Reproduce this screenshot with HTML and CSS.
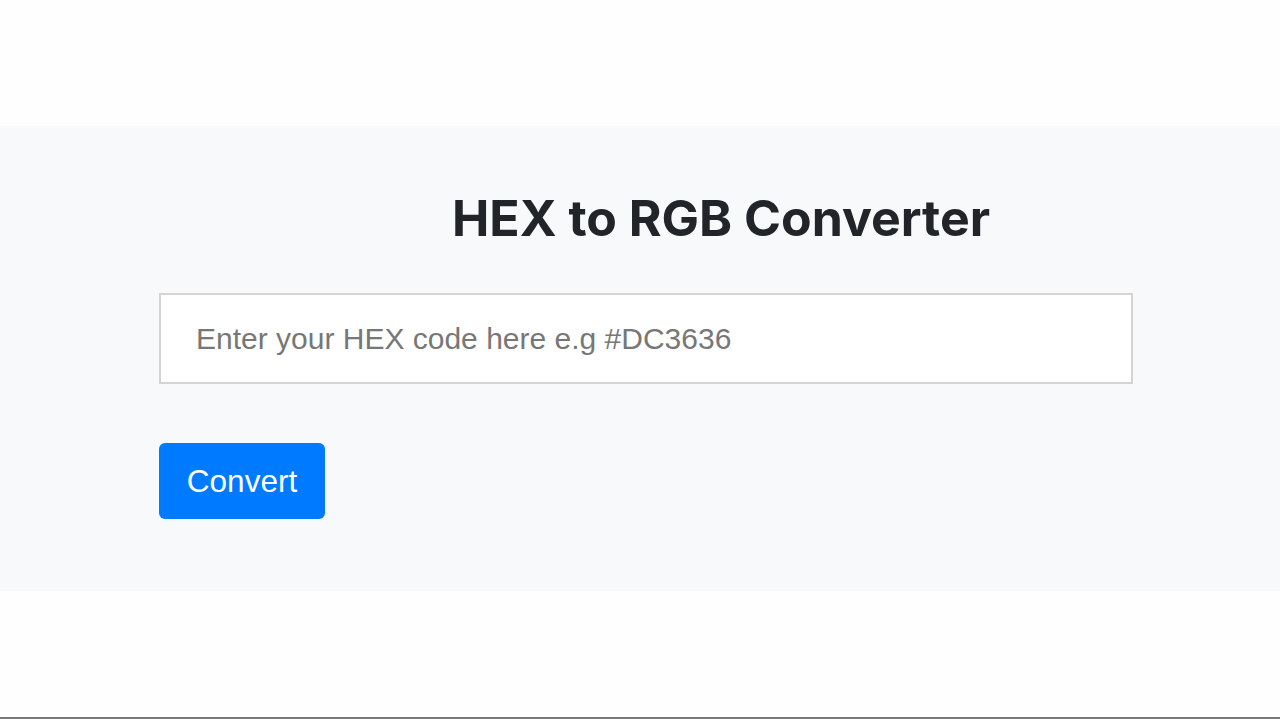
FILE: index.html
```html
<!DOCTYPE html>
<html lang="en">
<head>
    <meta charset="UTF-8">
    <meta name="viewport" content="width=device-width, initial-scale=1.0">
    <title>HEX to RGB Converter</title>
    <link rel="stylesheet" href="styles.css">
</head>
<body>

    <div class="page">
        <section class="converter">
            <h1 class="title">HEX to RGB Converter</h1>
            <input class="hex-input" type="text" placeholder="Enter your HEX code here e.g #DC3636">
            <button class="button">Convert</button>
        </section>
    </div>
    <div class="bottom-line"></div>

</body>
</html>
```

FILE: styles.css
```css
html, body {
    margin: 0;
    padding: 0;
    height: 100%;
}
body {
    font-family: "Liberation Sans", Arial, sans-serif;
    background-color: #fefefe;
    display: flex;
    flex-direction: column;
}
.page {
    flex: 1;
    padding-top: 126px;
}
.converter {
    background-color: #f8f9fa;
    height: 465px;
    box-sizing: border-box;
    padding: 0 147px 0 159px;
    display: flex;
    flex-direction: column;
    align-items: flex-start;
}
.title {
    align-self: stretch;
    margin: 62px 0 0 0;
    padding-left: 150px;
    text-align: center;
    font-family: Inter, "Noto Sans", sans-serif;
    font-size: 50px;
    font-weight: 700;
    line-height: 60px;
    color: #212529;
}
.hex-input {
    margin-top: 45px;
    width: 974px;
    height: 91px;
    box-sizing: border-box;
    border: 2px solid #d4d4d4;
    background: #fff;
    padding: 0 35px;
    font-family: "Liberation Sans", Arial, sans-serif;
    font-size: 30px;
    color: #333;
    outline: none;
}
.hex-input::placeholder {
    color: #777;
}
.button {
    margin-top: 59px;
    width: 166px;
    height: 76px;
    padding: 0;
    background-color: #007bff;
    color: white;
    font-family: "Liberation Sans", Arial, sans-serif;
    font-size: 31.5px;
    border: none;
    border-radius: 6px;
    cursor: pointer;
}
.button:hover {
    background-color: #0069d9;
}
.bottom-line {
    height: 2px;
    background-color: #777;
}
```
